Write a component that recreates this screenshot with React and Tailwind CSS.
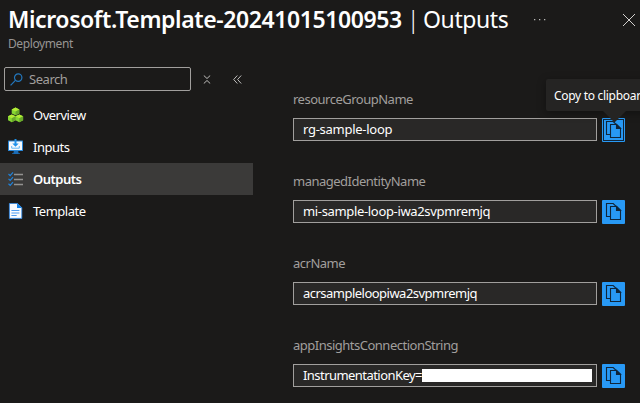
const OverviewIcon = () => (
  <svg width="16" height="16" viewBox="0 0 16 16">
    {[[7.5, 0.5], [3.8, 7.4], [11.3, 7.4]].map(([x, y]) => (
      <g key={x} transform={`translate(${x} ${y})`}>
        <path d="M0 0 3.8 1.9V5.9L0 7.8-3.8 5.9V1.9Z" fill="#86d633" />
        <path d="M0 0 3.8 1.9 0 3.9-3.8 1.9Z" fill="#b4ec36" />
        <path d="M3.8 1.9 0 3.9V7.8L3.8 5.9Z" fill="#69a82a" />
      </g>
    ))}
  </svg>
);

const InputsIcon = () => (
  <svg width="16" height="16" viewBox="0 0 16 16">
    <path d="M6 11h4l.6 3.2H12v.8H4v-.8h1.4Z" fill="#1b6cb5" />
    <rect x="0" y="1.5" width="15" height="10.5" rx=".6" fill="#2b88d8" />
    <rect x="1" y="2.5" width="13" height="8.5" fill="#f4f9fd" />
    <path d="M6.5 0h2v4.5h2.2L7.5 7.8 4.3 4.5h2.2Z" fill="#1e91ea" />
    <path d="M3.7 7v2.2h7.6V7" fill="none" stroke="#62b5f2" />
  </svg>
);

const OutputsIcon = () => (
  <svg width="16" height="16" viewBox="0 0 16 16" fill="none">
    <path d="M6 3.5h9M6 8.5h9M6 13.5h9" stroke="#939291" strokeWidth="1.3" />
    <path d="m.5 3 1.7 1.6L5 1.3M.5 7.9l1.7 1.6L5 6.2M.5 12.8l1.7 1.6L5 11.1" stroke="#1f83dc" strokeWidth="1.2" />
  </svg>
);

const TemplateIcon = () => (
  <svg width="16" height="16" viewBox="0 0 16 16">
    <path d="M1.4.4h8.1l4.3 4.3v10.7H1.4Z" fill="#f8fbff" stroke="#2b88e8" strokeWidth=".8" />
    <path d="M9 .2 14 5.1H9Z" fill="#1684e8" />
    <path d="M3.4 7.5h8M3.4 10h8M3.4 12.5h5.3" stroke="#4c9bf0" />
  </svg>
);

const CopyIcon = () => (
  <svg width="23" height="24" viewBox="0 0 23 24" fill="none" stroke="#10263b" strokeWidth="1.1">
    <path d="M8.5 16.5h-4v-13h6.7l3.2 3.2" />
    <path d="M8.5 6.5h6.2l3.8 3.8v9.2h-10Z" fill="#2899f5" />
    <path d="M14.5 6.5v4h4Z" fill="#10263b" />
  </svg>
);

const menu = [
  { label: "Overview", Icon: OverviewIcon },
  { label: "Inputs", Icon: InputsIcon },
  { label: "Outputs", Icon: OutputsIcon, selected: true },
  { label: "Template", Icon: TemplateIcon },
];

const outputs = [
  { name: "resourceGroupName", value: "rg-sample-loop", track: "tracking-[-0.27px]", hovered: true },
  { name: "managedIdentityName", value: "mi-sample-loop-iwa2svpmremjq", track: "tracking-[-0.34px]" },
  { name: "acrName", value: "acrsampleloopiwa2svpmremjq", track: "tracking-[-0.52px]" },
  { name: "appInsightsConnectionString", value: "InstrumentationKey=", track: "tracking-[-0.55px]", redacted: true },
];

function OutputField({ name, value, track, hovered, redacted }) {
  return (
    <div className="h-[82px]">
      <div className="h-[26px] text-[13px] leading-[14px] tracking-[-0.5px] text-[#a19f9d]">{name}</div>
      <div className="flex gap-[5px]">
        <div className={`flex h-[23px] w-[304px] items-center border border-[#a19f9d] bg-[#292827] pl-[9px] text-[13px] text-white ${track}`}>
          <span className={redacted ? "w-[119px]" : ""}>{value}</span>
          {redacted && <span className="h-[13px] w-[170px] bg-white" />}
        </div>
        <button className="relative h-6 w-[23px] rounded-[1px] bg-[#2899f5]">
          <CopyIcon />
          {hovered && (
            <>
              <span className="absolute inset-[1px] border border-[#10263b]" />
              <span className="absolute -top-[39px] -left-[56px] flex h-8 w-[120px] items-center rounded-[2px] bg-[#252423] pt-[2px] pl-2 text-xs tracking-[-0.3px] whitespace-nowrap text-white shadow-[0_2px_8px_rgba(0,0,0,0.35)]">
                Copy to clipboard
              </span>
              <svg className="absolute -top-[7px] left-0" width="24" height="12" viewBox="0 0 24 12">
                <path d="M1 0h23L12.5 11.5Z" fill="#252423" />
              </svg>
            </>
          )}
        </button>
      </div>
    </div>
  );
}

export default function App() {
  return (
    <div className="h-[403px] w-[640px] overflow-hidden bg-[#1b1a19] font-['Noto_Sans','Open_Sans',sans-serif] whitespace-nowrap text-white">
      <header className="flex h-[67px] justify-between pt-[5px] pl-2">
        <div>
          <div className="flex h-[29px] items-center text-[23px]">
            <h1 className="w-[399px] font-semibold tracking-[-0.4px]">Microsoft.Template-20241015100953</h1>
            <span className="w-4 font-light">|</span>
            <span className="w-[111px] tracking-[-0.4px]">Outputs</span>
            <svg width="12" height="4" viewBox="0 0 12 4" fill="#b8b7b6">
              <path d="M0 1h1.3v1.3H0zM5 1h1.3v1.3H5zM10 1h1.3v1.3H10z" />
            </svg>
          </div>
          <div className="pt-[2px] text-xs leading-4 tracking-[-0.4px] text-[#979593]">Deployment</div>
        </div>
        <svg className="mt-2 mr-1" width="14" height="14" viewBox="0 0 14 14" fill="none" stroke="#d2d0ce">
          <path d="m1 1 12 12M13 1 1 13" />
        </svg>
      </header>
      <main className="flex">
        <nav className="w-[253px]">
          <div className="flex h-8 pl-1">
            <div className="flex h-6 w-[187px] items-center gap-[6px] rounded-[2px] border border-[#a19f9d] pl-[5px] text-[13px] tracking-[-0.45px] text-[#a19f9d]">
              <svg width="13" height="13" viewBox="0 0 13 13" fill="none" stroke="#2377bd" strokeWidth="1.2">
                <circle cx="8.2" cy="4.6" r="3.7" />
                <path d="M5.4 7.4.6 12.4" />
              </svg>
              <span className="pt-[2px]">Search</span>
            </div>
            <svg className="mt-2 ml-3" width="8" height="9" viewBox="0 0 8 9" fill="none" stroke="#bebdbb">
              <path d="m.8.5 3.2 3 3.2-3M.8 8.5 4 5.5l3.2 3" />
            </svg>
            <svg className="mt-2 ml-[22px]" width="9" height="9" viewBox="0 0 9 9" fill="none" stroke="#bebdbb">
              <path d="M4.3.5.7 4.5l3.6 4M8.2.5 4.6 4.5l3.6 4" />
            </svg>
          </div>
          {menu.map(({ label, Icon, selected }) => (
            <div key={label} className={`flex h-8 items-center gap-[9px] pl-2 text-[13px] tracking-[-0.5px] ${selected ? "bg-[#3b3a39] font-semibold" : ""}`}>
              <Icon />
              <span className="pt-[2px]">{label}</span>
            </div>
          ))}
        </nav>
        <section className="pt-[25px] pl-10">
          {outputs.map((item) => (
            <OutputField key={item.name} {...item} />
          ))}
        </section>
      </main>
    </div>
  );
}
